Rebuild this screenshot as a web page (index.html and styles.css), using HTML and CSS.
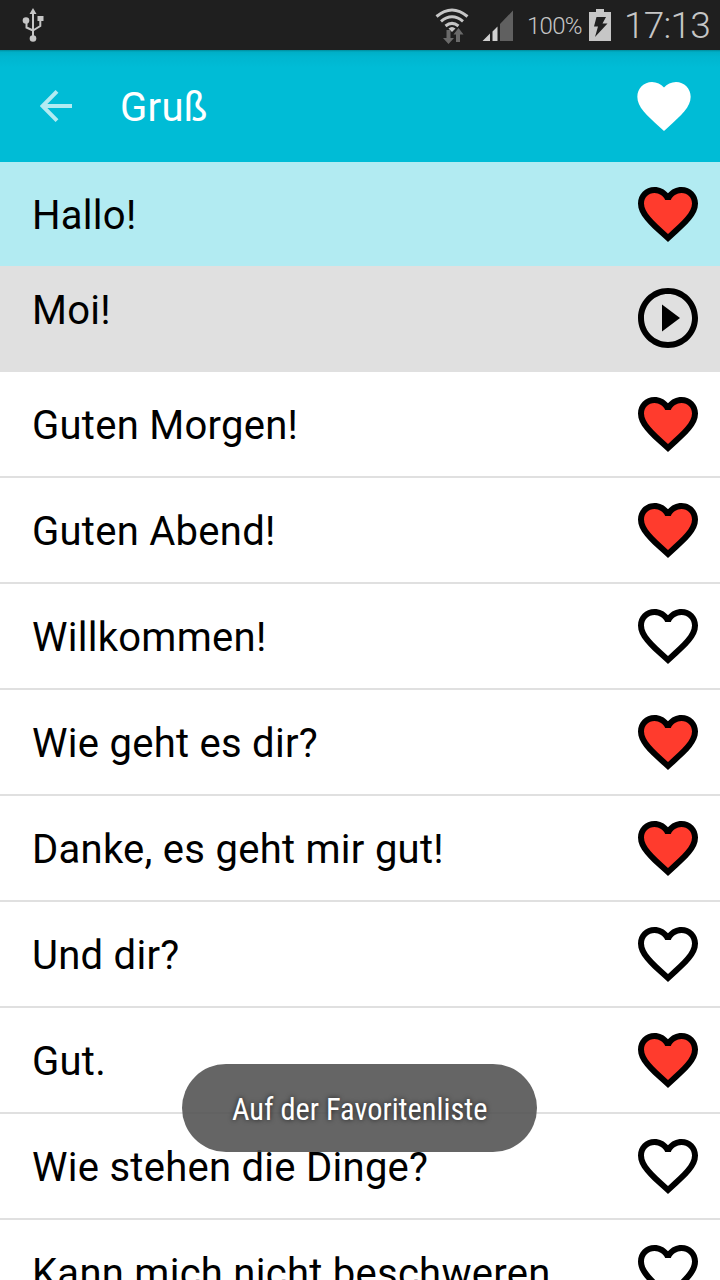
FILE: index.html
```html
<!DOCTYPE html>
<html lang="de">
<head>
    <meta charset="UTF-8">
    <meta name="viewport" content="width=device-width, initial-scale=1.0">
    <title>Gruß</title>
    <link rel="stylesheet" href="styles.css">
</head>
<body>
    <svg class="defs" width="0" height="0">
        <symbol id="heart" viewBox="0 0 24 24">
            <path d="M12 21.35l-1.45-1.32C5.4 15.36 2 12.28 2 8.5 2 5.42 4.42 3 7.5 3c1.74 0 3.41.81 4.5 2.09C13.09 3.81 14.76 3 16.5 3 19.58 3 22 5.42 22 8.5c0 3.78-3.4 6.86-8.55 11.54L12 21.35z"/>
        </symbol>
        <symbol id="heart-outline" viewBox="0 0 24 24">
            <path d="M16.5 3c-1.74 0-3.41.81-4.5 2.09C10.91 3.81 9.24 3 7.5 3 4.42 3 2 5.42 2 8.5c0 3.78 3.4 6.86 8.55 11.54L12 21.35l1.45-1.32C18.6 15.36 22 12.28 22 8.5 22 5.42 19.58 3 16.5 3zm-4.4 15.55l-.1.1-.1-.1C7.14 14.24 4 11.39 4 8.5 4 6.5 5.5 5 7.5 5c1.54 0 3.04.99 3.57 2.36h1.87C13.46 5.99 14.96 5 16.5 5c2 0 3.5 1.5 3.5 3.5 0 2.89-3.14 5.740-7.9 10.05z"/>
        </symbol>
        <symbol id="heart-red" viewBox="0 0 24 24">
            <path fill="#ff3b2d" d="M12 20l-1-1C6 14.5 3 12 3 8.5 3 6 5 4 7.5 4c1.8 0 3.5 1 4.5 2.5C13 5 14.7 4 16.5 4 19 4 21 6 21 8.5c0 3.5-3 6-8 10.5z"/>
            <use href="#heart-outline"/>
        </symbol>
    </svg>

    <div class="status-bar">
        <svg class="usb" width="22" height="36" viewBox="0 0 22 36">
            <path d="M11 5V30M4.500 13V20.500L11 23.500M18.300 11V19L11 23.500" fill="none" stroke="#c6c6c6" stroke-width="2"/>
            <path d="M11 1L14.500 7H7.500z" fill="#c6c6c6"/>
            <circle cx="4" cy="13.500" r="3.300" fill="#c6c6c6"/>
            <rect x="15.500" y="9" width="6" height="5" fill="#c6c6c6"/>
            <circle cx="11" cy="31.500" r="3.300" fill="#c6c6c6"/>
        </svg>
        <svg class="wifi" width="34" height="36" viewBox="0 0 34 36">
            <g fill="none" stroke="#c6c6c6" stroke-width="3">
                <path d="M1.500 8.500Q17 -4.500 32.500 8.500"/>
                <path d="M6 13.300Q17 4.200 28 13.300"/>
                <path d="M10.500 18Q17 12.800 23.500 18"/>
            </g>
            <path d="M13.500 20.500Q17 17.500 20.500 20.500L17 24z" fill="#c6c6c6"/>
            <path d="M11.500 22h4v8h3.500l-5.500 6-5.500-6h3.500zM21 34v-7.500h-2.500l5-6.500 5 6.500H25V34z" fill="#6a6a6a"/>
        </svg>
        <svg class="signal" width="32" height="32" viewBox="0 0 32 32">
            <path d="M0.500 31L8 23.500V31zM10.500 21.500L15.500 16.500V31H10.500z" fill="#d0d0d0"/>
            <path d="M18 14L31 0.500V31H18z" fill="#606060"/>
        </svg>
        <span class="percent">100%</span>
        <svg class="battery" width="22" height="32" viewBox="0 0 22 32">
            <path d="M7 0H15V3H22V32H0V3H7z" fill="#c6c6c6"/>
            <path d="M7.500 8H17L13.500 14.500H18.500L6 28L9 17.500H5z" fill="#1f1f1f"/>
        </svg>
        <span class="clock">17:13</span>
    </div>

    <div class="toolbar">
        <svg class="back" width="32" height="32" viewBox="0 0 32 32">
            <path d="M32 16H3M17 1.400L2.500 16L17 30.600" fill="none" stroke="#b2ebf2" stroke-width="4"/>
        </svg>
        <h1 class="title">Gruß</h1>
        <svg class="favorites"><use href="#heart"/></svg>
    </div>

    <div class="list">
        <div class="row selected">
            <span class="phrase">Hallo!</span>
            <svg class="icon"><use href="#heart-red"/></svg>
        </div>
        <div class="row translation">
            <span class="phrase">Moi!</span>
            <svg class="icon" viewBox="0 0 24 24">
                <path d="M10 16.500l6-4.500-6-4.500v9zM12 2C6.480 2 2 6.480 2 12s4.480 10 10 10 10-4.480 10-10S17.520 2 12 2zm0 18c-4.410 0-8-3.590-8-8s3.590-8 8-8 8 3.590 8 8-3.590 8-8 8z"/>
            </svg>
        </div>
        <div class="row">
            <span class="phrase">Guten Morgen!</span>
            <svg class="icon"><use href="#heart-red"/></svg>
        </div>
        <div class="row">
            <span class="phrase">Guten Abend!</span>
            <svg class="icon"><use href="#heart-red"/></svg>
        </div>
        <div class="row">
            <span class="phrase">Willkommen!</span>
            <svg class="icon"><use href="#heart-outline"/></svg>
        </div>
        <div class="row">
            <span class="phrase">Wie geht es dir?</span>
            <svg class="icon"><use href="#heart-red"/></svg>
        </div>
        <div class="row">
            <span class="phrase">Danke, es geht mir gut!</span>
            <svg class="icon"><use href="#heart-red"/></svg>
        </div>
        <div class="row">
            <span class="phrase">Und dir?</span>
            <svg class="icon"><use href="#heart-outline"/></svg>
        </div>
        <div class="row">
            <span class="phrase">Gut.</span>
            <svg class="icon"><use href="#heart-red"/></svg>
        </div>
        <div class="row">
            <span class="phrase">Wie stehen die Dinge?</span>
            <svg class="icon"><use href="#heart-outline"/></svg>
        </div>
        <div class="row">
            <span class="phrase">Kann mich nicht beschweren</span>
            <svg class="icon"><use href="#heart-outline"/></svg>
        </div>
    </div>

    <div class="toast"><span class="toast-text">Auf der Favoritenliste</span></div>
</body>
</html>
```
FILE: styles.css
```css
body {
    margin: 0;
    height: 1280px;
    overflow: hidden;
    display: flex;
    flex-direction: column;
    font-family: Roboto, sans-serif;
    background: #fff;
    color: #000;
}
.defs {
    position: absolute;
}
.status-bar {
    flex: none;
    height: 50px;
    display: flex;
    align-items: center;
    box-sizing: border-box;
    padding: 0 9px 0 22px;
    background: #1f1f1f;
    color: #c6c6c6;
}
.wifi {
    margin-left: auto;
    margin-top: 1px;
}
.signal {
    margin-left: 13px;
    margin-top: 2px;
}
.percent {
    width: 56px;
    margin-left: 13px;
    margin-top: 2px;
    font-size: 24px;
    font-weight: 300;
    letter-spacing: -0.7px;
    white-space: nowrap;
}
.battery {
    margin-left: 6px;
    margin-top: -1px;
}
.clock {
    width: 87px;
    margin-left: 13px;
    font-size: 37px;
    font-weight: 300;
    letter-spacing: -0.8px;
    white-space: nowrap;
}
.toolbar {
    flex: none;
    height: 112px;
    display: flex;
    align-items: center;
    box-sizing: border-box;
    padding: 0 24px 0 40px;
    background: linear-gradient(#008c9c 0, #00afc7 2px, #00b6d0 7px, #00bcd6 18px);
    color: #fff;
}
.title {
    flex: 1;
    margin: 4px 0 0 48px;
    font-size: 40px;
    font-weight: 400;
    line-height: 48px;
    letter-spacing: 0.3px;
}
.favorites {
    width: 64px;
    height: 64px;
    fill: #fff;
}
.list {
    flex: 1;
    min-height: 0;
    overflow: hidden;
}
.row {
    height: 104px;
    display: flex;
    align-items: center;
    justify-content: space-between;
    padding: 0 16px 0 32px;
    border-bottom: 2px solid #e0e0e0;
}
.phrase {
    font-size: 40px;
    line-height: 48px;
    letter-spacing: 0.27px;
    white-space: nowrap;
    margin-top: 4px;
}
.icon {
    width: 72px;
    height: 72px;
    flex: none;
}
.selected {
    background: #b2ebf2;
    border-bottom: 0;
}
.translation {
    background: #e0e0e0;
}
.translation .phrase {
    margin-top: -14px;
}
.toast {
    position: absolute;
    left: 182px;
    top: 1064px;
    width: 355px;
    height: 88px;
    display: flex;
    align-items: center;
    justify-content: center;
    border-radius: 44px;
    background: rgba(80, 80, 80, 0.88);
    color: #fff;
}
.toast-text {
    font-family: "Roboto Condensed", Roboto, sans-serif;
    font-size: 32px;
    font-stretch: 75%;
    white-space: nowrap;
    text-shadow: 0 0 5px rgba(0, 0, 0, 0.7);
    transform: translateY(1px) scaleX(0.948);
}
```
